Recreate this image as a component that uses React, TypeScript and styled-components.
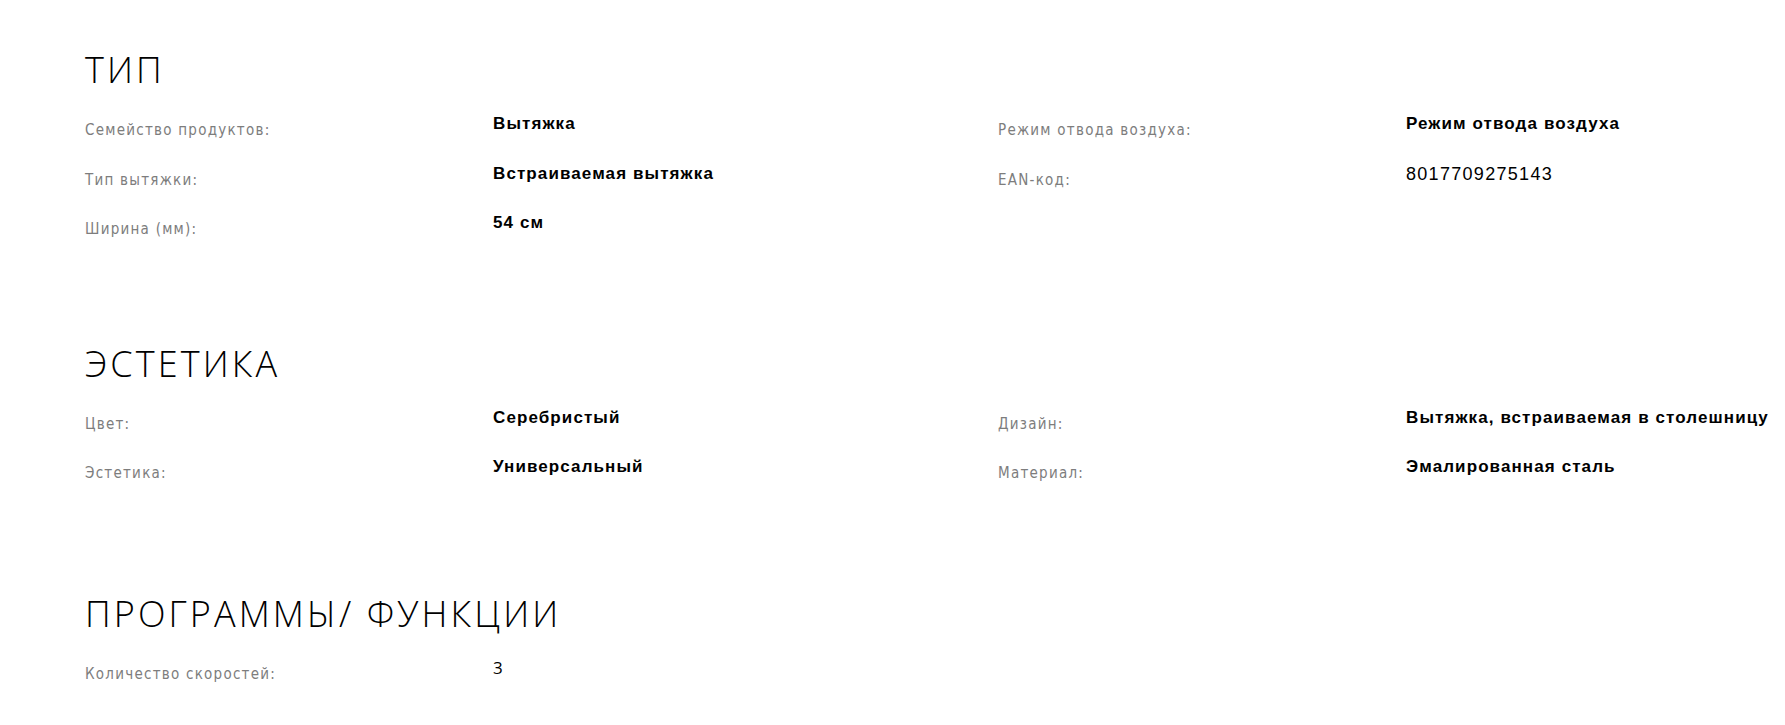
import React from "react";
import styled, { createGlobalStyle } from "styled-components";

const Global = createGlobalStyle`
  html, body { margin: 0; padding: 0; background: #fff; }
  body { font-family: "Liberation Sans", Arial, sans-serif; color: #000; }
`;

const Page = styled.main`
  padding: 48px 0 40px 85px;
  display: flex;
  flex-direction: column;
`;

const Section = styled.section<{ $space: number }>`
  display: flex;
  flex-direction: column;
  gap: 22px;
  margin-bottom: ${(p) => p.$space}px;
`;

const Heading = styled.h2`
  margin: 0;
  font-family: "Open Sans", sans-serif;
  font-weight: 300;
  font-size: 36px;
  line-height: 44px;
  letter-spacing: 3.1px;
  color: #000;
  text-transform: uppercase;
`;

const Columns = styled.div`
  display: grid;
  grid-template-columns: 913px 1fr;
  align-items: start;
`;

const List = styled.dl`
  margin: 0;
  display: flex;
  flex-direction: column;
`;

const Row = styled.div`
  display: grid;
  grid-template-columns: 408px 1fr;
  height: 49.5px;
`;

const Label = styled.dt`
  margin: 6px 0 0;
  font-family: "Liberation Sans Narrow", "DejaVu Sans Condensed", "Liberation Sans", sans-serif;
  font-size: 15px;
  line-height: 20px;
  letter-spacing: 1.25px;
  color: #7d7d7d;
  white-space: nowrap;
`;

type Kind = "bold" | "code" | "plain";

const Value = styled.dd<{ $kind: Kind }>`
  margin: 0;
  font-family: ${(p) => (p.$kind === "plain" ? '"Open Sans", sans-serif' : '"Liberation Sans", Arial, sans-serif')};
  font-weight: ${(p) => (p.$kind === "bold" ? 700 : 400)};
  font-size: ${(p) => (p.$kind === "code" ? 18 : 17)}px;
  letter-spacing: ${(p) => (p.$kind === "bold" ? 1.1 : p.$kind === "code" ? 1.3 : 0)}px;
  line-height: 20px;
  color: #000;
  white-space: nowrap;
`;

type Item = { label: string; value: string; kind?: Kind };
type Block = { title: string; space: number; left: Item[]; right: Item[] };

const data: Block[] = [
  {
    title: "Тип",
    space: 79,
    left: [
      { label: "Семейство продуктов:", value: "Вытяжка" },
      { label: "Тип вытяжки:", value: "Встраиваемая вытяжка" },
      { label: "Ширина (мм):", value: "54 см" },
    ],
    right: [
      { label: "Режим отвода воздуха:", value: "Режим отвода воздуха" },
      { label: "EAN-код:", value: "8017709275143", kind: "code" },
    ],
  },
  {
    title: "Эстетика",
    space: 85,
    left: [
      { label: "Цвет:", value: "Серебристый" },
      { label: "Эстетика:", value: "Универсальный" },
    ],
    right: [
      { label: "Дизайн:", value: "Вытяжка, встраиваемая в столешницу" },
      { label: "Материал:", value: "Эмалированная сталь" },
    ],
  },
  {
    title: "Программы/ функции",
    space: 0,
    left: [{ label: "Количество скоростей:", value: "3", kind: "plain" }],
    right: [],
  },
];

const Items: React.FC<{ items: Item[] }> = ({ items }) => (
  <List>
    {items.map((it) => (
      <Row key={it.label}>
        <Label>{it.label}</Label>
        <Value $kind={it.kind ?? "bold"}>{it.value}</Value>
      </Row>
    ))}
  </List>
);

export default function App() {
  return (
    <>
      <Global />
      <Page>
        {data.map((b) => (
          <Section key={b.title} $space={b.space}>
            <Heading>{b.title}</Heading>
            <Columns>
              <Items items={b.left} />
              <Items items={b.right} />
            </Columns>
          </Section>
        ))}
      </Page>
    </>
  );
}
